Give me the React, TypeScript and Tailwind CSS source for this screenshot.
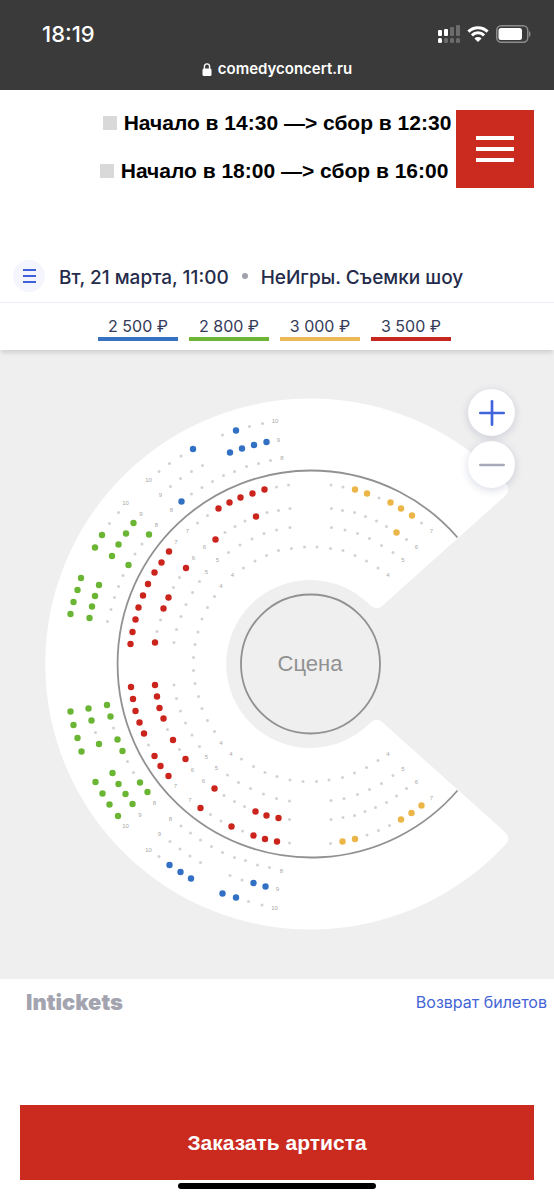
import { Minus, Plus } from 'lucide-react';

type Point = [number, number];

interface SeatGroup {
    name: string;
    color: string;
    radius: number;
    seats: Point[];
}

interface RowLabel {
    text: string;
    at: Point[];
}

const PRICES = [
    { label: '2 500 ₽', bar: 'bg-[#3671c2]' },
    { label: '2 800 ₽', bar: 'bg-[#6db536]' },
    { label: '3 000 ₽', bar: 'bg-[#edb958]' },
    { label: '3 500 ₽', bar: 'bg-[#c6271f]' },
];

const SEAT_GROUPS: SeatGroup[] = [
    {
        name: 'taken',
        color: '#d2d2d2',
        radius: 1.5,
        seats: [
            // upper outer sector
            [181, 456], [169.5, 463.5], [159, 471.5], [222.5, 435], [249.5, 426.5], [262.5, 423.5],
            [202.5, 465.5], [191.5, 471.5], [180.5, 478.5], [170.5, 486.5],
            [191.5, 494], [202, 487.5], [212.5, 481.5], [223.5, 475.5], [234.5, 471.5], [246.5, 466.5], [258.5, 463.5], [270.5, 460.5],
            // left outer sectors
            [118.5, 512.5], [109.5, 523.5], [142, 544], [135, 554], [123, 575.5], [118.5, 586.5], [114.5, 597.5], [111, 609.5], [107.5, 621.5],
            [95.5, 732.5], [113.5, 728], [127.5, 761.5], [133.5, 772.5],
            // upper inner rows
            [197.5, 523], [207.5, 515.5], [276.5, 487], [288.5, 485],
            [225, 532.5], [235, 526.5], [245, 521], [267, 512.5], [278.5, 510.5], [290, 508.5],
            [228.5, 552.5], [240, 545], [252, 539], [264, 533.5], [276.5, 530], [290, 527.5],
            [243.5, 568], [255, 561], [266.5, 555.5], [278.5, 550.5], [291.5, 548.5], [304.5, 547], [317, 547],
            // upper right
            [331, 485], [343, 487], [379, 498], [421.5, 523],
            [331.5, 508.5], [342.5, 510.5], [354.5, 512.5], [365.5, 516.5], [376.5, 521], [386.5, 526.5], [406.5, 539.5],
            [331.5, 527.5], [345, 530], [357.5, 533.5], [369.5, 538.5], [381.5, 545.5], [393, 552.5],
            [330.5, 548.5], [343, 550.5], [355, 555.5], [366.5, 561], [378, 568],
            // left inner rows
            [179.5, 577.5], [173.5, 587.5], [160.5, 620], [157, 631.5],
            [199.5, 581.5], [192.5, 592.5], [186, 604.5], [181, 616.5], [176.5, 629.5], [174, 642.5],
            [214.5, 596.5], [207.5, 607.5], [202, 619], [198, 632], [195, 644.5], [193.5, 657.5],
            [193.5, 670.5], [195, 683.5], [198.5, 696.5], [202, 708.5], [207.5, 720.5], [214.5, 731.5],
            [174, 685], [176.5, 698.5], [180.5, 711], [185.5, 723], [192, 735], [199.5, 746.5],
            [148.5, 745], [167.5, 729.5], [179.5, 749.5],
            // lower inner rows
            [210.5, 814.5], [221, 821], [242.5, 831], [289.5, 843],
            [224, 795.5], [234.5, 801.5], [244.5, 806.5], [289.5, 819.5],
            [227.5, 775], [238.5, 782.5], [250.5, 788.5], [263.5, 794], [276.5, 798.5], [289.5, 801],
            [241.5, 759], [253.5, 766.5], [265, 772.5], [277, 776.5], [290, 780], [303, 781.5], [316.5, 781.5],
            // lower right
            [329, 780], [342.5, 777.5], [354.5, 773], [366.5, 767.5], [378, 760.5],
            [331, 800.5], [344, 798.5], [357.5, 794.5], [369.5, 789.5], [381.5, 783.5], [393, 775.5],
            [331, 819.5], [343, 817.5], [354.5, 815.5], [365, 811.5], [375.5, 807.5], [386.5, 802.5], [396.5, 796], [406.5, 788.5],
            [330.5, 843.5], [367, 835], [378.5, 830.5], [389.5, 825.5],
            // lower outer sector
            [181, 826], [190.5, 833], [200.5, 840], [211.5, 846.5], [222.5, 852.5], [234.5, 857.5], [245.5, 860.5], [257.5, 865], [269.5, 867.5],
            [170, 841.5], [180, 849], [190, 856], [200.5, 862.5], [230, 875.5], [242, 880],
            [159, 856.5], [248.5, 901.5], [262, 905],
        ],
    },
    {
        name: '2500',
        color: '#3270c3',
        radius: 3.2,
        seats: [
            [193, 449], [181.5, 501.5], [236, 430.5], [230, 452.5], [242, 448.5], [254, 445], [266.5, 442],
            [169.5, 865], [180.5, 872], [191, 878.5], [222.5, 893.5], [236, 897.5], [253.5, 883], [265.5, 886.5],
        ],
    },
    {
        name: '2800',
        color: '#6bb534',
        radius: 3.2,
        seats: [
            [133.5, 523], [126, 533.5], [118.5, 544.5], [112, 556], [149, 534.5], [102, 535], [95, 547.5], [128.5, 565],
            [81, 578], [77.5, 590], [73.5, 602], [70.5, 614], [99, 585], [95, 596], [92, 606.5], [89.5, 618],
            [70.5, 711.5], [73.5, 725], [77.5, 738], [81.5, 751.5], [88.5, 708.5], [91.5, 720.5], [99, 744],
            [107, 705], [110.5, 716.5], [117.5, 739.5], [122.5, 751], [112.5, 773], [95.5, 782], [102.5, 793.5],
            [109.5, 804.5], [118, 816], [118.5, 784], [125.5, 794], [132.5, 804], [140, 782.5], [147.5, 792],
        ],
    },
    {
        name: '3000',
        color: '#ecb548',
        radius: 3.2,
        seats: [
            [355, 489.5], [367, 493.5], [390.5, 502.5], [401, 508.5], [412, 515.5], [396.5, 532.5],
            [342.5, 841.5], [355, 839], [401, 819.5], [411.5, 813], [421.5, 805.5],
        ],
    },
    {
        name: '3500',
        color: '#cb241d',
        radius: 3.2,
        seats: [
            [218.5, 508.5], [229.5, 502.5], [240.5, 497.5], [252.5, 493.5], [264.5, 489.5], [256, 516.5], [215.5, 539.5],
            [169, 551.5], [161.5, 562.5], [154.5, 572.5], [148, 584], [143, 595.5], [138.5, 607.5], [135.5, 619.5],
            [132.5, 632], [130.5, 644], [186, 568], [168.5, 597.5], [163.5, 608.5], [155, 642.5],
            [131, 687], [133, 699], [135.5, 711], [139.5, 722.5], [144, 733.5], [154.5, 756], [160.5, 766], [168.5, 776],
            [155, 685], [157, 696.5], [159.5, 708], [163.5, 718.5], [173, 740], [185.5, 759],
            [200.5, 808], [231.5, 826.5], [253.5, 835.5], [265, 839], [277, 841.5],
            [214.5, 788.5], [255.5, 811.5], [266.5, 815.5], [278.5, 818],
        ],
    },
];

const ROW_LABELS: RowLabel[] = [
    { text: '4', at: [[232.5, 574.5], [221, 586], [388, 574.5], [221, 742.5], [231, 753.5], [388, 754]] },
    { text: '5', at: [[217.5, 559.5], [206.5, 571.5], [403, 560], [206.5, 757], [216.5, 767.5], [403, 768.5]] },
    { text: '6', at: [[204.5, 546.5], [193.5, 558], [416.5, 546.5], [192.5, 770], [203.5, 781], [416.5, 782]] },
    { text: '7', at: [[187.5, 530.5], [176, 541.5], [431.5, 530.5], [175.5, 786], [190, 800], [431.5, 798]] },
    { text: '8', at: [[171.5, 509.5], [156.5, 524.5], [282, 458], [154.5, 802.5], [170.5, 818.5], [281.5, 870.5]] },
    { text: '9', at: [[160.5, 494.5], [141, 513.5], [278.5, 439.5], [140, 814.5], [159.5, 834], [277.5, 889]] },
    { text: '10', at: [[148.5, 479.5], [125.5, 502.5], [275, 421], [125.5, 826], [148.5, 849.5], [274.5, 907.5]] },
];

function StatusIcons() {
    return (
        <div className="flex items-center gap-[7px]">
            <svg width="22" height="18" viewBox="0 0 22 18" aria-hidden="true">
                <g fill="#fff">
                    <rect x="0" y="5" width="4" height="6" rx="1" />
                    <rect x="6" y="4" width="4" height="7" rx="1" />
                    <rect x="0" y="13" width="4" height="5" rx="1.5" />
                </g>
                <g fill="#6c6c6c">
                    <rect x="12" y="2" width="4" height="9" rx="1" />
                    <rect x="18" y="0" width="4" height="11" rx="1" />
                    <rect x="6" y="13" width="4" height="5" rx="1.5" />
                    <rect x="12" y="13" width="4" height="5" rx="1.5" />
                    <rect x="18" y="13" width="4" height="5" rx="1.5" />
                </g>
            </svg>
            <svg width="22" height="16" viewBox="0 0 22 16" aria-hidden="true">
                <g fill="none" stroke="#fff" strokeWidth="3">
                    <path d="M1.4 5.6a13.6 13.6 0 0 1 19.2 0" />
                    <path d="M4.9 9.4a8.6 8.6 0 0 1 12.2 0" />
                </g>
                <path d="M11 16l-3.6-3.6a5.2 5.2 0 0 1 7.2 0z" fill="#fff" />
            </svg>
            <svg width="35" height="18" viewBox="0 0 35 18" aria-hidden="true">
                <rect x="0.75" y="0.75" width="31" height="16.5" rx="4.5" fill="none" stroke="#8c8c8c" strokeWidth="1.5" />
                <rect x="2.5" y="3" width="23.5" height="12" rx="2.5" fill="#fff" />
                <path d="M33 6v6c2-.8 2-5.2 0-6z" fill="#8c8c8c" />
            </svg>
        </div>
    );
}

function LockIcon() {
    return (
        <svg width="10" height="13" viewBox="0 0 10 13" aria-hidden="true">
            <rect x="0.5" y="5.5" width="9" height="7.5" rx="1.5" fill="#fff" />
            <path d="M2.4 6V3.8a2.6 2.9 0 0 1 5.2 0V6" fill="none" stroke="#fff" strokeWidth="1.4" />
        </svg>
    );
}

function SeatMap() {
    return (
        <svg viewBox="0 350 554 629" className="block w-full" role="img" aria-label="Схема зала">
            <path
                d="M370 723Q376 717 382 722L505 832Q512 839 505 845A265.5 265.5 0 1 1 505 483Q512 489 505 496L382 606Q376 611 370 605A84 84 0 1 0 370 723Z"
                fill="#fff"
            />
            <path d="M457.5 537.5A193.5 193.5 0 1 0 457.5 790.5" fill="none" stroke="#919191" strokeWidth="1.8" />
            <circle cx="310.5" cy="664" r="69.5" fill="none" stroke="#919191" strokeWidth="1.8" />
            <text x="310" y="671" textAnchor="middle" className="fill-[#919191] font-['Liberation_Sans',sans-serif] text-[22px]">
                Сцена
            </text>
            {ROW_LABELS.map((label) => (
                <g key={label.text} textAnchor="middle" className="fill-[#a8a8a8] font-['Liberation_Sans',sans-serif] text-[6px]">
                    {label.at.map(([x, y]) => (
                        <text key={`${x}-${y}`} x={x} y={y + 2}>{label.text}</text>
                    ))}
                </g>
            ))}
            {SEAT_GROUPS.map((group) => (
                <g key={group.name} fill={group.color}>
                    {group.seats.map(([x, y]) => (
                        <circle key={`${x}-${y}`} cx={x} cy={y} r={group.radius} />
                    ))}
                </g>
            ))}
        </svg>
    );
}

export default function App() {
    return (
        <div className="relative min-h-screen bg-white font-[Inter,sans-serif]">
            {/* Browser chrome */}
            <header className="bg-[#3a3a3a] h-[90px] pt-5 text-white">
                <div className="flex items-center justify-between pl-[42px] pr-[23px]">
                    <span className="text-[22px] leading-7 font-medium">18:19</span>
                    <StatusIcons />
                </div>
                <div className="mt-2 flex items-center justify-center gap-[6px]">
                    <LockIcon />
                    <span className="text-[15px] leading-[26px] font-semibold">comedyconcert.ru</span>
                </div>
            </header>

            <button aria-label="Меню" className="absolute top-[110px] right-5 w-[78px] h-[78px] bg-[#cb2a1f] flex flex-col items-center justify-center gap-[7px]">
                <span className="w-[38px] h-1 bg-white" />
                <span className="w-[38px] h-1 bg-white" />
                <span className="w-[38px] h-1 bg-white" />
            </button>

            <div className="pt-[9px] h-[160px] text-center font-['Liberation_Sans',sans-serif] font-bold text-[21px] leading-[48px] text-black whitespace-nowrap">
                <p>
                    <span className="inline-block w-[14px] h-[14px] bg-[#d9d9d9] mr-[7px]" />
                    Начало в 14:30 —&gt; сбор в 12:30
                </p>
                <p>
                    <span className="inline-block w-[14px] h-[14px] bg-[#d9d9d9] mr-[7px]" />
                    Начало в 18:00 —&gt; сбор в 16:00&nbsp;
                </p>
            </div>

            {/* Ticket widget */}
            <section>
                <div className="relative z-10 bg-white shadow-[0_4px_4px_-1px_rgba(0,0,0,0.12)]">
                    <div className="flex items-center h-[53px] pl-[13px] border-b border-[#ededf8] text-[#252b4a]">
                        <button aria-label="Сеансы" className="w-8 h-8 rounded-full bg-[#f5f5fe] flex flex-col items-center justify-center gap-1">
                            <span className="w-[13px] h-[2px] bg-[#3f61dc]" />
                            <span className="w-[13px] h-[2px] bg-[#3f61dc]" />
                            <span className="w-[13px] h-[2px] bg-[#3f61dc]" />
                        </button>
                        <h1 className="flex items-center pt-1 pl-[14px] text-[19px] font-medium whitespace-nowrap">
                            Вт, 21 марта, 11:00
                            <span className="mx-[13px] mb-1 w-[6px] h-[6px] rounded-full bg-[#9fa1ab]" />
                            НеИгры. Съемки шоу
                        </h1>
                    </div>
                    <ul className="flex justify-center gap-[11px] pt-3 pb-[9px] pr-[5px] text-[#343a58]">
                        {PRICES.map((price) => (
                            <li key={price.label} className="w-20 text-center text-base leading-[22px]">
                                {price.label}
                                <div className={`h-1 ${price.bar}`} />
                            </li>
                        ))}
                    </ul>
                </div>

                <div className="relative bg-[#efefef]">
                    <SeatMap />
                    <div className="absolute top-[39px] right-[39px] flex flex-col gap-[5px]">
                        <button aria-label="Приблизить" className="w-[47px] h-[47px] rounded-full bg-white shadow-[0_2px_8px_rgba(40,50,110,0.18)] flex items-center justify-center text-[#3f64dc]">
                            <Plus size={40} strokeWidth={1.6} />
                        </button>
                        <button aria-label="Отдалить" className="w-[47px] h-[47px] rounded-full bg-white shadow-[0_2px_8px_rgba(40,50,110,0.18)] flex items-center justify-center text-[#a9aaba]">
                            <Minus size={40} strokeWidth={1.6} />
                        </button>
                    </div>
                </div>

                <div className="flex items-center justify-between h-[46px] pl-[26px] pr-[7px]">
                    <span className="text-[22px] font-black text-[#a3a4af]">Intickets</span>
                    <a href="#refund" className="text-base text-[#4365d6]">Возврат билетов</a>
                </div>
            </section>

            <div className="px-5 pt-20">
                <button className="w-full h-[75px] bg-[#cb2a1f] text-white font-['Liberation_Sans',sans-serif] font-bold text-[21px]">
                    Заказать артиста
                </button>
            </div>
            <div className="mx-auto mt-[3px] w-[198px] h-[6px] rounded-full bg-black" />
        </div>
    );
}
